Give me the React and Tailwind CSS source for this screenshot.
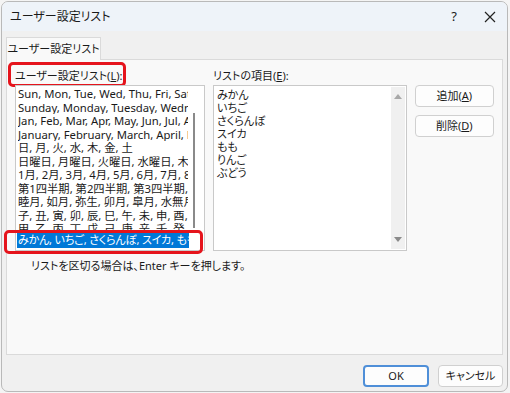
import React from 'react';

const leftRows = [
    'Sun, Mon, Tue, Wed, Thu, Fri, Sat',
    'Sunday, Monday, Tuesday, Wednesday, Thursday, Friday, Saturday',
    'Jan, Feb, Mar, Apr, May, Jun, Jul, Aug, Sep, Oct, Nov, Dec',
    'January, February, March, April, May, June, July',
    '日, 月, 火, 水, 木, 金, 土',
    '日曜日, 月曜日, 火曜日, 水曜日, 木曜日, 金曜日, 土曜日',
    '1月, 2月, 3月, 4月, 5月, 6月, 7月, 8月, 9月',
    '第1四半期, 第2四半期, 第3四半期, 第4四半期',
    '睦月, 如月, 弥生, 卯月, 皐月, 水無月, 文月',
    '子, 丑, 寅, 卯, 辰, 巳, 午, 未, 申, 酉, 戌, 亥',
    '甲, 乙, 丙, 丁, 戊, 己, 庚, 辛, 壬, 癸',
];

const items = ['みかん', 'いちご', 'さくらんぼ', 'スイカ', 'もも', 'りんご', 'ぶどう'];

const Btn = ({ children, primary }) => (
    <button
        type="button"
        className={
            'h-[22px] rounded-[4px] bg-[#fdfdfd] text-[11px] text-[#1a1a1a] ' +
            (primary ? 'border-2 border-[#4f8fd8]' : 'border border-[#d0d0d0]')
        }
    >
        {children}
    </button>
);

const App = () => {
    return (
        <div className="w-[510px] h-[393px] bg-[#f4f4f4] p-[1px] font-['Noto_Sans','Noto_Sans_CJK_JP',sans-serif] [font-feature-settings:'palt'] text-[#1a1a1a] text-[11px]">
            <div className="w-[507px] h-[391px] rounded-[7px] border border-[#b9b9b9] bg-[#f0f0f0] overflow-hidden flex flex-col">
                {/* title bar */}
                <div className="h-[29px] bg-[#eef3f9] flex items-center pl-[8px] pr-[11px] text-[12px]">
                    <span>ユーザー設定リスト</span>
                    <span className="ml-auto text-[13px] mr-[27px]">?</span>
                    <svg width="12" height="12" viewBox="0 0 12 12" className="text-[#222]">
                        <path d="M1 1 L11 11 M11 1 L1 11" stroke="currentColor" strokeWidth="1.2" />
                    </svg>
                </div>

                <div className="flex-1 flex flex-col px-[4px] pt-[6px]">
                    {/* tab */}
                    <div className="flex">
                        <div className="w-[95px] h-[23px] bg-[#f9f9f9] border border-b-0 border-[#dadada] flex items-center justify-center whitespace-nowrap -mb-[1px] relative">
                            ユーザー設定リスト
                        </div>
                    </div>

                    {/* panel */}
                    <div className="h-[296px] bg-[#f9f9f9] border border-[#dadada] px-[8px] pt-[6px]">
                        <div className="flex gap-[8px]">
                            {/* left list */}
                            <div className="w-[190px] flex flex-col">
                                <div className="h-[19px] leading-[19px] whitespace-nowrap">
                                    <span className="relative inline-block">
                                        ユーザー設定リスト(<span className="underline">L</span>):
                                        <span className="absolute -left-[7px] -right-[4px] -top-[4px] h-[25px] rounded-[5px] border-[3px] border-[#e5141c]" />
                                    </span>
                                </div>
                                <div className="relative h-[166px] bg-white border border-[#c9c9c9] flex flex-col leading-[13.5px]">
                                    <div className="flex-1 overflow-hidden pt-[1px] pl-[2px] pr-[16px] text-[11.3px]">
                                        {leftRows.map((r) => (
                                            <div key={r} className="h-[13.5px] whitespace-nowrap overflow-hidden">{r}</div>
                                        ))}
                                    </div>
                                    <div className="h-[16px] mb-[2px] mr-[15px] ml-[1px] bg-[#0078d7] text-white whitespace-nowrap overflow-hidden leading-[16px] pl-[1px] tracking-[-0.2px]">
                                        みかん, いちご, さくらんぼ, スイカ, もも, りんご, ぶどう
                                    </div>
                                    <div className="absolute right-[9px] top-[27px] w-[2px] h-[115px] bg-[#8a8a8a]" />
                                    <div className="absolute -left-[12px] right-[1px] bottom-[-4px] h-[24px] rounded-[5px] border-[3px] border-[#e5141c]" />
                                </div>
                            </div>

                            {/* right list */}
                            <div className="w-[195px] flex flex-col">
                                <div className="h-[19px] leading-[19px]">
                                    リストの項目(<span className="underline">E</span>):
                                </div>
                                <div className="h-[166px] bg-white border border-[#c9c9c9] flex">
                                    <div className="flex-1 pl-[3px] pt-[2px] leading-[13px]">
                                        {items.map((i) => (
                                            <div key={i} className="h-[13px]">{i}</div>
                                        ))}
                                    </div>
                                    <div className="w-[14px] mr-[1px] my-[1px] bg-[#f0f0f0] flex flex-col items-center justify-between py-[7px]">
                                        <svg width="8" height="5" viewBox="0 0 8 5">
                                            <path d="M0 5 L4 0 L8 5 Z" fill="#a8a8a8" />
                                        </svg>
                                        <svg width="8" height="5" viewBox="0 0 8 5">
                                            <path d="M0 0 L8 0 L4 5 Z" fill="#8a8a8a" />
                                        </svg>
                                    </div>
                                </div>
                            </div>

                            {/* side buttons */}
                            <div className="w-[80px] flex flex-col gap-[8px] pt-[19px]">
                                <Btn>追加(<span className="underline">A</span>)</Btn>
                                <Btn>削除(<span className="underline">D</span>)</Btn>
                            </div>
                        </div>

                        <div className="pl-[16px] pt-[7px]">リストを区切る場合は、Enter キーを押します。</div>
                    </div>

                    {/* bottom buttons */}
                    <div className="flex justify-end gap-[9px] pt-[10px]">
                        <div className="w-[66px] flex flex-col"><Btn primary>OK</Btn></div>
                        <div className="w-[65px] flex flex-col"><Btn>キャンセル</Btn></div>
                    </div>
                </div>
            </div>
        </div>
    );
};

export default App;
